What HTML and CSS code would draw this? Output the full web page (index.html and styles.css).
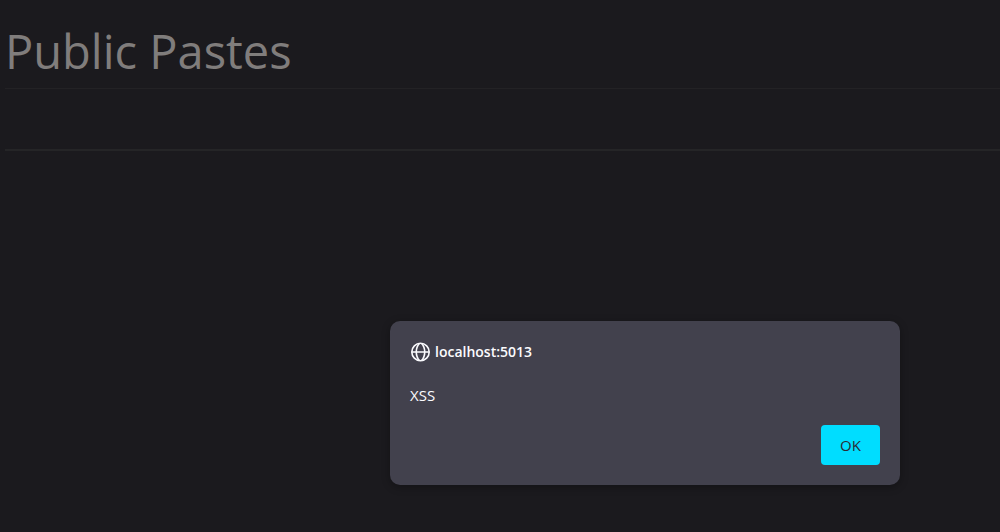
FILE: index.html
```html
<!DOCTYPE html>
<html lang="en">
<head>
<meta charset="utf-8">
<meta name="viewport" content="width=device-width, initial-scale=1">
<title>Public Pastes</title>
<link rel="stylesheet" href="styles.css">
</head>
<body>
<main class="page">
  <h1 class="page-title">Public Pastes</h1>
  <section class="paste"></section>
</main>
<div class="dialog" role="alertdialog" aria-labelledby="origin" aria-describedby="message">
  <div class="dialog-header">
    <svg class="globe" viewBox="0 0 20 20" fill="none" stroke="currentColor" stroke-width="1.6" aria-hidden="true">
      <circle cx="10" cy="10" r="8.7"/>
      <path d="M9 1.3C4.700 6 4.700 14 9 18.700M11 1.300C15.300 6 15.300 14 11 18.700M1.300 10h17.400"/>
    </svg>
    <span id="origin">localhost:5013</span>
  </div>
  <p class="message" id="message">XSS</p>
  <div class="actions"><button class="ok" type="button">OK</button></div>
</div>
</body>
</html>
```
FILE: styles.css
```css
* {
  box-sizing: border-box;
}

body {
  margin: 0;
  min-height: 100vh;
  background: #1b1a1e;
  color: #807d7c;
  font-family: "Segoe UI", "Open Sans", "Noto Sans", sans-serif;
}

.page {
  padding: 17px 0 0 5px;
}

.page-title {
  margin: 0;
  padding-bottom: 3px;
  border-bottom: 1px solid #232225;
  font-size: 47px;
  font-weight: 400;
  line-height: 68px;
}

.paste {
  height: 62px;
  border-bottom: 2px solid #252527;
}

.dialog {
  position: absolute;
  right: 100px;
  bottom: 47px;
  width: 510px;
  padding: 21px 20px 20px;
  border-radius: 10px;
  background: #42414d;
  box-shadow: 0 2px 8px rgba(0, 0, 0, 0.3);
  color: #fbfbfe;
  font-size: 15px;
  line-height: 20px;
}

.dialog-header {
  display: flex;
  align-items: center;
  gap: 4px;
  font-size: 14px;
  font-weight: 600;
}

.globe {
  width: 21px;
  height: 20px;
}

.message {
  margin: 23px 0 20px;
}

.actions {
  display: flex;
  justify-content: flex-end;
}

.ok {
  width: 59px;
  height: 40px;
  padding: 0;
  border: 0;
  border-radius: 4px;
  background: #00ddff;
  color: #2b2a33;
  font: inherit;
}
```
